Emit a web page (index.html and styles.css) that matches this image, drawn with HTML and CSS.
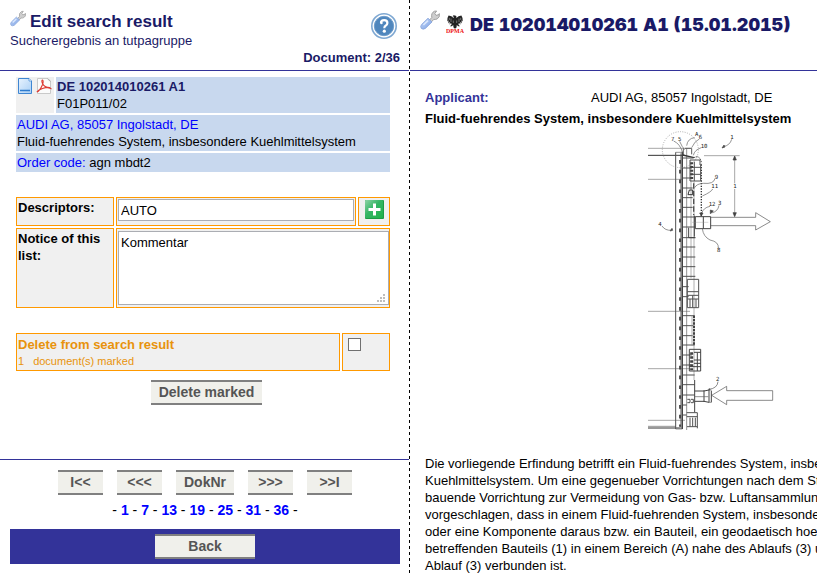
FILE: index.html
```html
<!DOCTYPE html>
<html lang="en">
<head>
<meta charset="utf-8">
<title>Edit search result</title>
<link rel="stylesheet" href="styles.css">
</head>
<body>
<svg class="defs" aria-hidden="true">
  <defs>
    <linearGradient id="handle" x1="0" y1="0" x2="1" y2="1"><stop offset="0" stop-color="#c3d6f8"/><stop offset="1" stop-color="#7ea3e4"/></linearGradient>
    <linearGradient id="page" x1="0" y1="0" x2="1" y2="1"><stop offset="0" stop-color="#e8f3fe"/><stop offset="1" stop-color="#a9cff6"/></linearGradient>
    <linearGradient id="plus" x1="0" y1="0" x2="1" y2="1"><stop offset="0" stop-color="#8fd3a6"/><stop offset=".45" stop-color="#35b565"/><stop offset="1" stop-color="#1fb24a"/></linearGradient>
    <symbol id="wrench" viewBox="0 0 20 20">
      <path d="M9 10.500 11.800 7.500Q10.800 3 14.500 1.200L16.600 1 14.800 3.600 16 5.400 18.800 4.600 19.300 3.600Q20.200 7.400 17.200 8.900 15.400 9.700 13.800 9.400L11.300 12Z" fill="#cecece" stroke="#9a9a9a" stroke-width=".9"/>
      <path d="M8 8.200 12 12 5.400 18.400Q3 20 1.200 18.300 0 16.400 1.600 14.500Z" fill="url(#handle)" stroke="#86a3da" stroke-width=".8"/>
      <path d="M3.400 15 8 10.700" stroke="#dbe8fd" stroke-width="1.600"/>
    </symbol>
  </defs>
</svg>
<div class="layout">
  <section class="pane editor">
    <header class="head">
      <div class="head-row">
        <div>
          <h1 class="title"><svg class="wrench-small" aria-hidden="true"><use href="#wrench"/></svg>Edit search result</h1>
          <p class="subtitle">Sucherergebnis an tutpagruppe</p>
        </div>
        <button class="help" type="button" aria-label="Help">
          <svg viewBox="0 0 26 26" aria-hidden="true">
            <circle cx="13" cy="13" r="12.200" fill="#fff" stroke="#7fa8d2" stroke-width="1.600"/>
            <circle cx="13" cy="13" r="9.700" fill="#4f86bd" stroke="#6f9dcb"/>
            <path d="M10 10Q9.800 7.200 13.200 7.200 16.400 7.200 16.400 10 16.400 11.800 14.600 12.800 13.400 13.500 13.300 15.200" fill="none" stroke="#fff" stroke-width="2.200"/>
            <circle cx="10.400" cy="9.900" r="1.300" fill="#fff"/><circle cx="13.300" cy="18.200" r="1.600" fill="#fff"/>
          </svg>
        </button>
      </div>
      <p class="counter">Document: 2/36</p>
    </header>

    <div class="body">
      <div class="record">
        <div class="record-top">
          <div class="record-icons">
            <svg viewBox="0 0 16 16" aria-hidden="true"><path d="M1.500.5H12L14.500 3V15.500H1.500Z" fill="url(#page)" stroke="#3f86d2"/><path d="M12 .5V3H14.500" fill="#fff" stroke="#3f86d2" stroke-width=".7"/><path d="M3 12.500H13" stroke="#2f7ccf" stroke-width="1.500"/></svg>
            <svg viewBox="0 0 16 16" aria-hidden="true"><path d="M1.500.5H12L14.500 3V15.500H1.500Z" fill="#fbfbfb" stroke="#c9c9c9"/><path d="M11.500.8 14.500 3.500" stroke="#aaa"/><path d="M1.200 14Q4 12.500 6.600 6.500 7.800 2.500 6.500 2 5.200 2.400 6.500 5.500 8.500 9.500 14.800 10.500 13 8.300 6.500 10.500 2.500 11.800.8 14" fill="none" stroke="#dc3a32" stroke-width="1.100"/></svg>
          </div>
          <div class="cell"><strong class="navy">DE 102014010261 A1</strong><br>F01P011/02</div>
        </div>
        <div class="cell"><a href="#applicant">AUDI AG, 85057 Ingolstadt, DE</a><br>Fluid-fuehrendes System, insbesondere Kuehlmittelsystem</div>
        <div class="cell"><a href="#order">Order code:</a> agn mbdt2</div>
      </div>

      <form class="form">
        <div class="form-grid">
          <label class="box label" for="descriptors">Descriptors:</label>
          <div class="box"><input class="field" id="descriptors" type="text" value="AUTO"></div>
          <div class="box add-box">
            <button class="add" type="button" aria-label="Add descriptor">
              <svg viewBox="0 0 19 19" aria-hidden="true"><rect width="19" height="19" rx="1" fill="#1c9b45"/><rect width="18" height="18" rx="1" fill="url(#plus)"/><path d="M9.500 3.500V15.500M3.500 9.500H15.500" stroke="#fff" stroke-width="3"/></svg>
            </button>
          </div>
          <label class="box label" for="notice">Notice of this list:</label>
          <div class="box notice-box">
            <textarea class="field notice" id="notice">Kommentar</textarea>
            <svg class="grip" viewBox="0 0 8 8" aria-hidden="true"><path d="M6 0h2v2H6zM3 3h2v2H3zM6 3h2v2H6zM0 6h2v2H0zM3 6h2v2H3zM6 6h2v2H6z" fill="#bebebe"/></svg>
          </div>
        </div>
        <div class="delete-grid">
          <label class="box delete-label" for="mark"><strong>Delete from search result</strong><span class="marked"><span>1</span><span>document(s) marked</span></span></label>
          <div class="box check-box"><input class="check" id="mark" type="checkbox"></div>
        </div>
        <div class="center"><button class="btn" type="button">Delete marked</button></div>
      </form>
    </div>

    <footer class="foot">
      <nav class="nav">
        <button class="btn step" type="button">I&lt;&lt;</button>
        <button class="btn step" type="button">&lt;&lt;&lt;</button>
        <button class="btn step" type="button">DokNr</button>
        <button class="btn step" type="button">&gt;&gt;&gt;</button>
        <button class="btn step" type="button">&gt;&gt;I</button>
      </nav>
      <p class="pages">- <a href="#1">1</a> - <a href="#7">7</a> - <a href="#13">13</a> - <a href="#19">19</a> - <a href="#25">25</a> - <a href="#31">31</a> - <a href="#36">36</a> -</p>
      <div class="bar"><button class="btn back" type="button">Back</button></div>
    </footer>
  </section>

  <section class="pane viewer">
    <header class="head viewer-head">
      <svg class="wrench-large" aria-hidden="true"><use href="#wrench"/></svg>
      <svg class="dpma" viewBox="0 0 18 20" role="img" aria-label="DPMA">
        <path d="M9 1.500 7.600 1.200 6.500 2.200 7.800 2.800 7.600 4 5.400 2.300 2.600 1.600 1.500 4 1.300 7.500 2.500 6.200 2.200 9.500 3.600 7.800 3.700 10.800 5 8.800 5.600 10.500 4 12.200 5.800 12.200 7.200 11 7.500 13.500 9 14.800 10.500 13.500 10.800 11 12.200 12.200 14 12.200 12.400 10.500 13 8.800 14.300 10.800 14.400 7.800 15.800 9.500 15.500 6.200 16.700 7.500 16.500 4 15.400 1.600 12.600 2.300 10.400 4 10.300 2Z" fill="#222"/>
        <path d="M5 4.500V8M3.300 3.800V6M13 4.500V8M14.700 3.800V6M7.300 6.500V9M10.700 6.500V9" stroke="#aaa" stroke-width=".6"/>
        <text class="dpma-text" x="9" y="19" text-anchor="middle">DPMA</text>
      </svg>
      <h2 class="doc-title">DE 102014010261 A1 (15.01.2015)</h2>
    </header>
    <article class="doc">
      <dl class="meta"><dt>Applicant:</dt><dd>AUDI AG, 85057 Ingolstadt, DE</dd></dl>
      <h3 class="doc-sub">Fluid-fuehrendes System, insbesondere Kuehlmittelsystem</h3>
      <figure class="figure">
        <svg class="drawing" viewBox="0 6 450 909" role="img" aria-label="Patent drawing">
          <g class="lines" fill="none" stroke="#444" stroke-width="2">
            <path d="M24 70H152M24 163H126M24 559H150M24 731H150M24 886H135" stroke="#666"/>
            <path d="M24 91H134M24 909H120" stroke="#111" stroke-width="3"/><path d="M24 904H108"/>
            <path d="M107 82V912M123 85V912" stroke="#333" stroke-width="3"/>
            <path d="M107 82H127M107 912H127"/>
            <path d="M127 80V912" stroke="#222" stroke-width="4"/>
            <path d="M120 105V905" stroke="#111" stroke-width="5" stroke-dasharray="11 18.400"/>
            <path d="M140 70V920" stroke="#444"/><path d="M153 110V460M162 170V765" stroke="#777"/>
            <circle cx="121" cy="74" r="54" stroke="#777" stroke-dasharray="3 4"/>
            <path d="M130 70V92M135 70H155V88" stroke="#444" stroke-width="3"/><path d="M128 90 162 98" stroke="#111" stroke-width="4"/>
            <path d="M128 99H160M128 129H155M128 159H158M128 189H158M128 218H158M128 247H158M128 276H166M128 306H166M128 338H166M128 366H166M128 396H166M128 425H166M128 454H166M128 485H146M128 515H146M128 572H164M128 602H160M128 632H158M128 660H164M128 690H155M128 720H155M128 750H164M128 779H164M128 810H164M128 840H140M128 870H140" stroke="#333" stroke-width="3"/>
            <path d="M162 98Q180 88 185 115" stroke="#111" stroke-width="3" stroke-dasharray="4 3"/>
            <path d="M184 118V275" stroke="#111" stroke-width="4" stroke-dasharray="4 4"/>
            <path d="M150 105H180V120M150 105V168H182V118M150 127H182M152 148H182M163 110V168" stroke="#333" stroke-width="3"/>
            <path d="M155 112V164" stroke="#222" stroke-width="9" stroke-dasharray="6 5"/>
            <path d="M161 175V270" stroke="#333" stroke-width="4" stroke-dasharray="16 7"/>
            <path d="M144 209H158V195H148Z" stroke="#111" stroke-width="3"/>
            <path d="M163 272V335M166 275H212V311H166ZM190 275V311M146 308V338H166" stroke="#222" stroke-width="3"/>
            <path d="M156 292H205" stroke="#777" stroke-width="1"/>
            <path d="M212 277H347V263L391 290 347 315V302H212" stroke="#333"/>
            <path d="M192 92H299M284 95V175M284 192V272" stroke="#666"/>
            <path d="M284 93 279 105H289ZM284 275 279 263H289ZM255 66 246 69 252 60ZM98 316 90 318 96 310ZM184 273 189 264 179 264ZM211 266 220 258 211 255Z" fill="#222" stroke="#222"/>
            <path d="M275 43Q270 61 250 65M66 303Q75 317 95 316M101 48Q120 56 128 83M119 49Q126 66 134 74M164 38Q143 40 140 62M178 42Q164 48 155 68M184 68Q164 74 160 91M225 160Q222 178 190 175 170 176 164 188M218 192Q214 201 187 213M210 244Q190 248 185 265M237 241Q234 260 214 264M235 370Q237 350 210 345 190 335 187 311" stroke="#444"/>
            <path d="M142 463H176V548H142ZM142 500H176M142 511H176M150 522V548M158 511V548M168 522V548M142 522H176" stroke="#333" stroke-width="3"/>
            <path d="M162 572V662" stroke="#222" stroke-width="6" stroke-dasharray="7 3"/><path d="M156 570V662" stroke="#777"/>
            <path d="M148 673H182V738H148ZM162 682H182M162 705H182M162 715H182M172 683V738M148 725H182" stroke="#222" stroke-width="3"/>
            <path d="M155 682V736" stroke="#222" stroke-width="9" stroke-dasharray="7 5"/>
            <path d="M164 765V862M164 798H192L207 795V832L192 829H164M192 796V831M214 797V832" stroke="#222" stroke-width="3"/><path d="M207 795H214M207 832H214M164 815H205"/>
            <path d="M142 823H150V833H142M153 823H160V833H153M140 863H172V910M140 875H172M141 905H172M150 878V905M158 878V905M166 878V905" stroke="#333" stroke-width="3"/>
            <path d="M398 797H260V784L215 811 260 839V826H398ZM234 770Q232 790 207 793" stroke="#333"/>
            <circle cx="208" cy="793" r="2" fill="#111"/>
          </g>
          <g class="num">
            <text x="165" y="32">A</text><text x="93" y="48">7</text><text x="114" y="48">5</text><text x="176" y="43">6</text><text x="182" y="68">10</text><text x="271" y="43">1</text><text x="224" y="162">9</text><text x="214" y="190">11</text><text x="206" y="243">12</text><text x="234" y="241">3</text><text x="280" y="189">1</text><text x="55" y="303">4</text><text x="231" y="382">8</text><text x="228" y="769">2</text>
          </g>
        </svg>
      </figure>
      <p class="abstract">Die vorliegende Erfindung betrifft ein Fluid-fuehrendes System, insbesondere<br>Kuehlmittelsystem. Um eine gegenueber Vorrichtungen nach dem Stand<br>bauende Vorrichtung zur Vermeidung von Gas- bzw. Luftansammlungen<br>vorgeschlagen, dass in einem Fluid-fuehrenden System, insbesondere<br>oder eine Komponente daraus bzw. ein Bauteil, ein geodaetisch hoechster<br>betreffenden Bauteils (1) in einem Bereich (A) nahe des Ablaufs (3) und<br>Ablauf (3) verbunden ist.</p>
    </article>
  </section>
</div>
</body>
</html>
```
FILE: styles.css
```css
* { box-sizing: border-box; }

body {
  margin: 0;
  background: #fff;
  color: #000;
  font: 13px/17px "Liberation Sans", Arial, sans-serif;
}

h1, h2, h3, p, dl, dd, figure { margin: 0; }
button, input, textarea { margin: 0; font: inherit; }
a { color: #00f; text-decoration: none; }
svg { display: block; }

.defs { position: absolute; width: 0; height: 0; }

.layout {
  display: grid;
  grid-template-columns: minmax(0, 409fr) minmax(0, 408fr);
  min-height: 100vh;
}
.pane { display: flex; flex-direction: column; min-width: 0; }
.viewer {
  overflow: hidden;
  padding-left: 1px;
  background: repeating-linear-gradient(#000 0 3px, #fff 3px 6px) left / 1px 100% no-repeat;
}

.head { height: 71px; border-bottom: 1px solid #339; padding: 10px 9px 0 10px; color: #1a1a66; }
.head-row { display: flex; justify-content: space-between; height: 39px; }
.title { display: flex; gap: 4px; font-size: 17px; line-height: 23px; }
.subtitle { line-height: 16px; }
.wrench-small { width: 16px; height: 17px; }
.wrench-large { width: 20px; height: 20px; }
.help { width: 26px; height: 26px; margin: 3px 3px 0 0; padding: 0; border: 0; background: none; }
.help svg { width: 26px; height: 26px; }
.counter { font-weight: bold; text-align: right; }

.body { padding: 6px 19px 0 16px; }
.record, .form-grid, .delete-grid { display: grid; gap: 2px; }
.record-top { display: grid; grid-template-columns: 38px 1fr; gap: 2px; }
.record-icons { display: flex; gap: 3px; padding: 1px; background: #f0f0f0; }
.record-icons svg { width: 16px; height: 16px; }
.cell { padding: 1px; background: #c8d8ee; }
.navy { color: #1a1a66; }

.form { padding-top: 25px; }
.form-grid { grid-template-columns: 98px 1fr 32px; }
.box { padding: 1px; border: 1px solid #f90; background: #f0f0f0; }
.label { min-height: 29px; font-weight: bold; }
.field {
  display: block;
  width: 100%;
  height: 22px;
  padding: 2px;
  border: 1px solid #abadb3;
  border-radius: 0;
  background: #fff;
}
.add-box { display: flex; justify-content: center; }
.add { width: 19px; height: 19px; margin-top: 1px; padding: 0; border: 0; background: none; }
.notice-box { position: relative; grid-column: span 2; height: 80px; padding: 2px 0 2px 1px; }
.notice { height: 74px; resize: none; }
.grip { position: absolute; right: 4px; bottom: 5px; width: 8px; height: 8px; }

.delete-grid { grid-template-columns: 1fr 48px; margin-top: 25px; }
.delete-label { height: 38px; padding-top: 2px; color: #e8930c; }
.marked { display: flex; gap: 9px; font-size: 11px; }
.check-box { padding: 4px 5px; }
.check { appearance: none; display: block; width: 13px; height: 13px; border: 1px solid #707070; background: #fff; }
.check:checked { background: #707070; }

.center { display: flex; justify-content: center; margin-top: 9px; padding-left: 7px; }
.btn {
  height: 25px;
  padding: 0 8px;
  border: solid #808080;
  border-width: 2px 0;
  background: #f0f0eb;
  color: #555;
  font-size: 14px;
  font-weight: bold;
}

.foot { margin-top: auto; padding: 10px 9px 10px 10px; border-top: 1px solid #339; }
.nav { display: flex; justify-content: center; gap: 14px; }
.step { min-width: 45px; }
.pages { margin: 7px 0 10px; font-size: 14px; text-align: center; }
.pages a { font-weight: bold; }
.bar { display: flex; justify-content: center; padding: 5px; background: #339; }
.back { width: 100px; }

.viewer-head { display: flex; align-items: flex-start; gap: 6px; }
.dpma { width: 18px; height: 20px; margin-top: 4px; }
.dpma-text { fill: #e11; font: bold 6px "Liberation Serif", serif; }
.doc-title {
  font: 900 18px/30px Inter, "Liberation Sans", sans-serif;
  font-variant-numeric: tabular-nums;
  white-space: nowrap;
}
.doc { width: 580px; margin-left: 15px; padding-top: 18px; }
.meta { display: grid; grid-template-columns: 166px 1fr; }
.meta dt { color: #339; font-weight: bold; }
.doc-sub { margin-top: 4px; font-size: 13px; line-height: 17px; }
.figure { display: flex; justify-content: center; }
.drawing { width: 150px; height: 303px; }
.lines { opacity: .85; }
.num text { fill: #222; font: 17px "DejaVu Sans Mono", monospace; }
.abstract { margin-top: 25px; white-space: nowrap; }
```
